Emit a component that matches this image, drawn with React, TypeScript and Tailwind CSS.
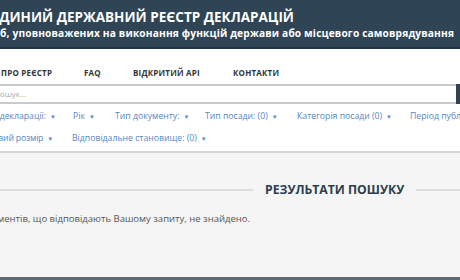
import React from "react";

const navItems = [
    { label: "ПРО РЕЄСТР", w: "ml-[1px] w-[83px]" },
    { label: "FAQ", w: "w-[49px]" },
    { label: "ВІДКРИТИЙ API", w: "w-[100px]" },
    { label: "КОНТАКТИ", w: "" },
];

const filtersRow1 = [
    { label: "Рік", w: "w-[42px]" },
    { label: "Тип документу:", w: "w-[90px]" },
    { label: "Тип посади: (0)", w: "w-[92px]" },
    { label: "Категорія посади (0)", w: "w-[113px]" },
    { label: "Період публікації", w: "w-[90px]" },
];

function Caret() {
    return <span className="ml-[4px] text-[6px]">▼</span>;
}

export default function App() {
    return (
        <div
            className="w-[460px] h-[280px] overflow-hidden flex flex-col bg-[#f4f5f4]"
            style={{ fontFamily: '"Open Sans", "Noto Sans", sans-serif' }}
        >
            <div className="h-[49px] shrink-0 bg-[#2f4555] border-b-2 border-[#23343f] flex flex-col justify-center overflow-hidden">
                <div className="ml-[-10px] mt-[1px] whitespace-nowrap text-white font-bold text-[13.5px] leading-[18px]">
                    ЄДИНИЙ ДЕРЖАВНИЙ РЕЄСТР ДЕКЛАРАЦІЙ
                </div>
                <div className="ml-[-15px] mt-[1px] whitespace-nowrap text-white font-bold text-[10.2px] leading-[13px] tracking-[0.15px]">
                    осіб, уповноважених на виконання функцій держави або місцевого самоврядування
                </div>
            </div>

            <div className="bg-white shrink-0 overflow-hidden">
                <div className="h-[35px] flex items-end pb-[5px] whitespace-nowrap">
                    {navItems.map((item) => (
                        <div
                            key={item.label}
                            className={`${item.w} shrink-0 text-[8px] font-bold text-[#333] tracking-[0.2px]`}
                        >
                            {item.label}
                        </div>
                    ))}
                </div>
                <div className="flex h-[20px]">
                    <div className="flex-1 border-y-2 border-[#c9cbcb] flex items-center ml-[-8px] pl-[2px]">
                        <span className="text-[8px] text-[#aaa]">Пошук...</span>
                    </div>
                    <div className="w-[4px] bg-[#2f4555]" />
                </div>
                <div className="pt-[6px] pb-[5px] border-b-2 border-[#d4d6d6] text-[8.7px] text-[#5288c8]">
                    <div className="flex whitespace-nowrap h-[14px] items-center">
                        <div className="w-[73px] shrink-0 flex justify-end pr-[17px]">
                            <span>
                                Тип декларації:
                                <Caret />
                            </span>
                        </div>
                        {filtersRow1.map((f) => (
                            <div key={f.label} className={`${f.w} shrink-0`}>
                                {f.label}
                                <Caret />
                            </div>
                        ))}
                    </div>
                    <div className="flex whitespace-nowrap mt-[8px] h-[14px] items-center">
                        <div className="w-[72px] shrink-0 flex justify-end pr-[19px]">
                            <span className="tracking-[-0.2px]">
                                Цифровий розмір
                                <Caret />
                            </span>
                        </div>
                        <div className="shrink-0">
                            Відповідальне становище: (0)
                            <Caret />
                        </div>
                    </div>
                </div>
            </div>

            <div className="flex-1 flex flex-col">
                <div className="mt-[28px] flex items-center h-[18px]">
                    <div className="w-[253px] h-[2px] bg-[#dcdede]" />
                    <div className="px-[12px] text-[12.2px] font-bold text-[#2c3e4c] whitespace-nowrap">
                        РЕЗУЛЬТАТИ ПОШУКУ
                    </div>
                    <div className="flex-1 h-[2px] bg-[#dcdede]" />
                </div>
                <div className="mt-[13px] flex justify-end w-[250px] whitespace-nowrap text-[9.5px] text-[#555]">
                    <span>Документів, що відповідають Вашому запиту, не знайдено.</span>
                </div>
            </div>
            <div className="h-[3px] bg-[#5c6a73] shrink-0" />
        </div>
    );
}
